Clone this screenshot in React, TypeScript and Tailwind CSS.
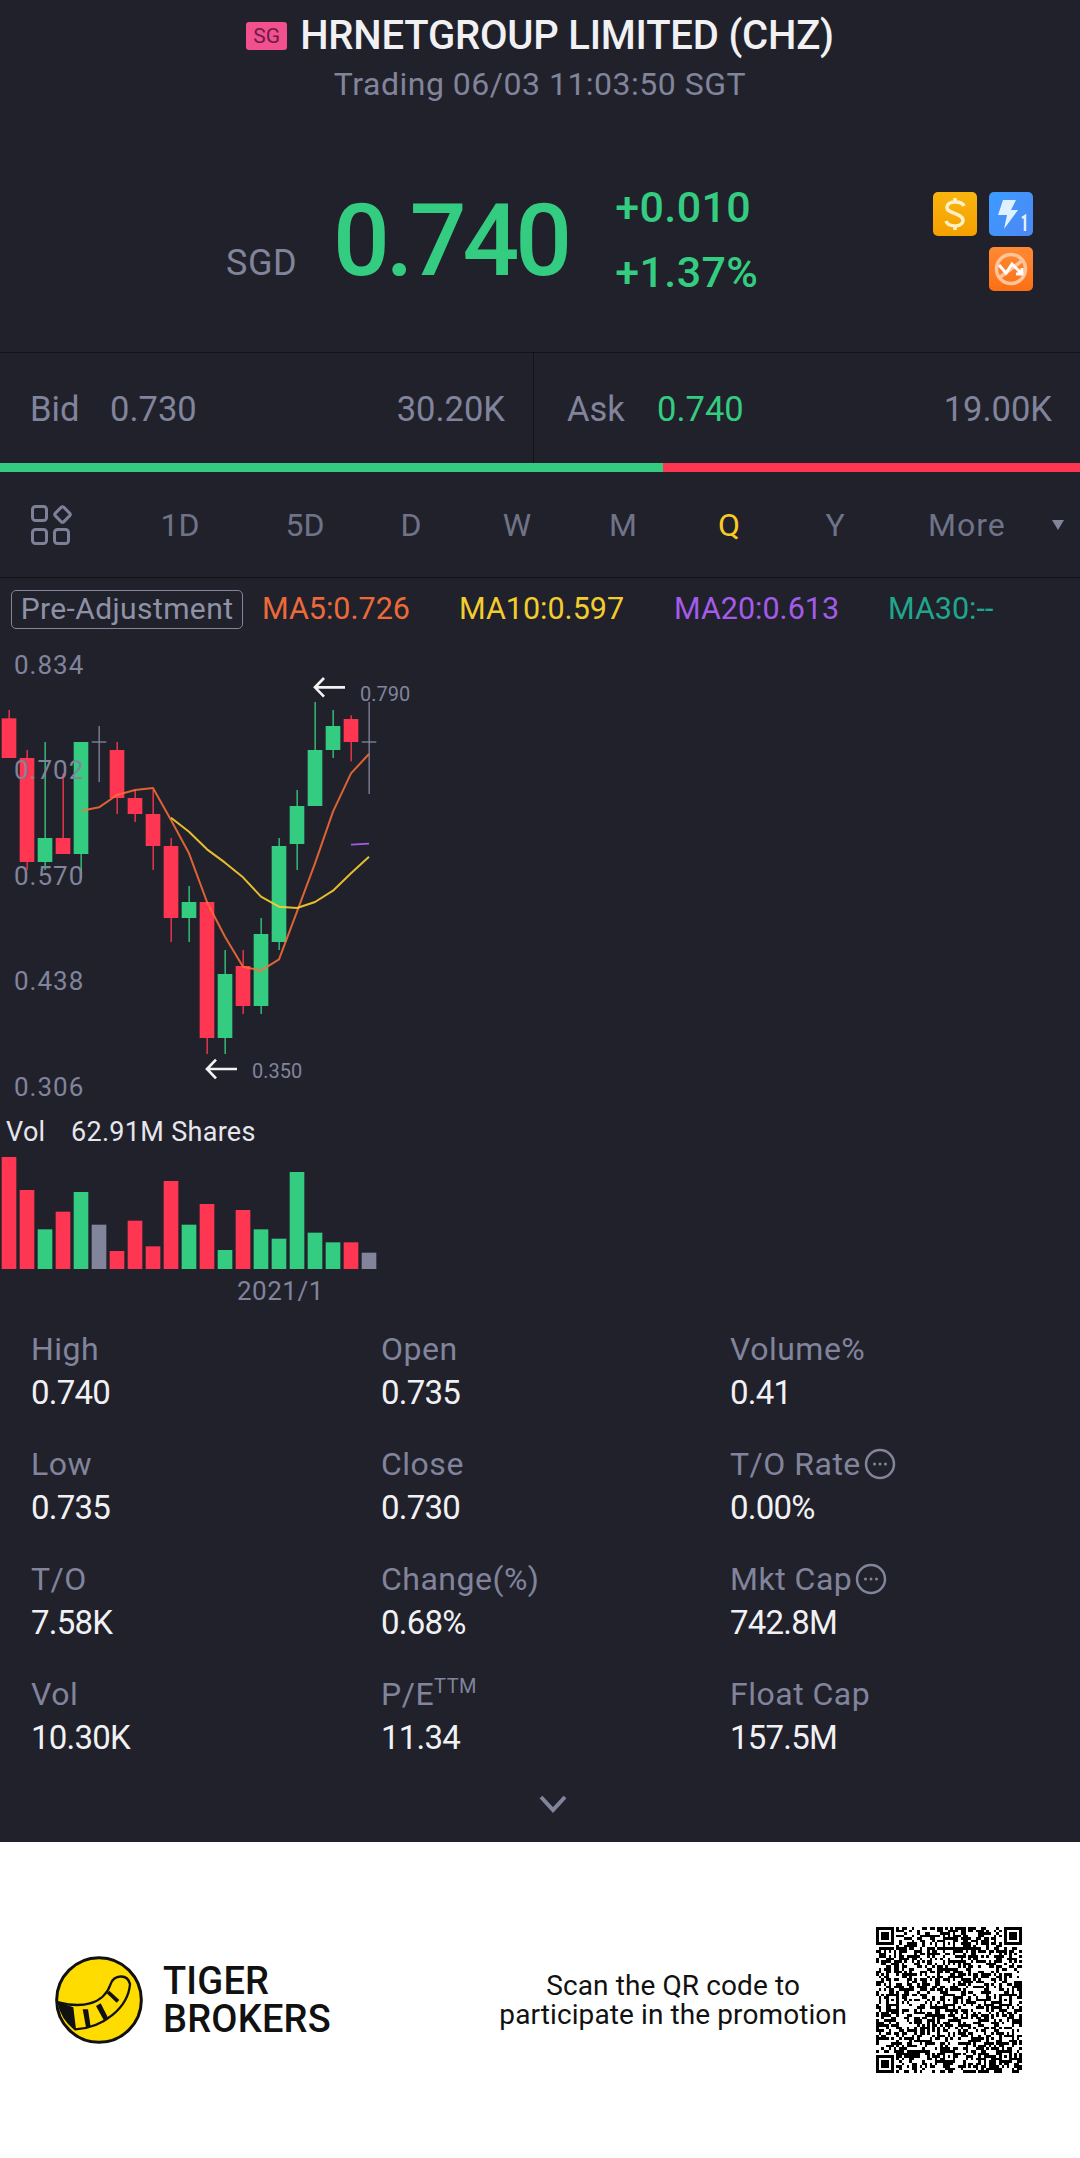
const GREEN = "#34cc80";
const RED = "#ff3652";
const GRAY = "#81849b";

// [x index implied] type, bodyTop, bodyBottom, wickTop, wickBottom (chart units = 1/3 px)
const candles: [string, number, number, number, number][] = [
  ["r", 235, 354, 210, 354],
  ["r", 354, 666, 330, 690],
  ["g", 594, 666, 306, 690],
  ["r", 594, 642, 400, 642],
  ["g", 306, 642, 306, 714],
  ["n", 306, 306, 258, 426],
  ["r", 330, 474, 306, 522],
  ["r", 474, 522, 450, 546],
  ["r", 522, 618, 450, 690],
  ["r", 618, 834, 594, 906],
  ["g", 786, 834, 738, 906],
  ["r", 786, 1194, 786, 1242],
  ["g", 1002, 1194, 930, 1242],
  ["r", 978, 1098, 930, 1122],
  ["g", 882, 1098, 834, 1122],
  ["g", 618, 906, 594, 930],
  ["g", 498, 612, 450, 690],
  ["g", 330, 498, 186, 498],
  ["g", 258, 330, 210, 354],
  ["r", 237, 306, 226, 364],
  ["n", 306, 306, 186, 462],
];

const volumes: [string, number][] = [
  ["r", 171], ["r", 270], ["g", 388], ["r", 335], ["g", 276], ["n", 374], ["r", 453],
  ["r", 362], ["r", 439], ["r", 243], ["g", 374], ["r", 312], ["g", 450], ["r", 330],
  ["g", 388], ["g", 416], ["g", 216], ["g", 398], ["g", 427], ["r", 427], ["n", 458],
];

const tone = (t: string) => (t === "r" ? RED : t === "g" ? GREEN : GRAY);

const stats = [
  { label: "High", value: "0.740" },
  { label: "Open", value: "0.735" },
  { label: "Volume%", value: "0.41" },
  { label: "Low", value: "0.735" },
  { label: "Close", value: "0.730" },
  { label: "T/O Rate", value: "0.00%", info: true },
  { label: "T/O", value: "7.58K" },
  { label: "Change(%)", value: "0.68%" },
  { label: "Mkt Cap", value: "742.8M", info: true },
  { label: "Vol", value: "10.30K" },
  { label: "P/E", value: "11.34", sup: "TTM" },
  { label: "Float Cap", value: "157.5M" },
];

function InfoIcon() {
  return (
    <svg width="32" height="32" viewBox="0 0 32 32" className="ml-[3px] shrink-0" fill="none">
      <circle cx="16" cy="16" r="14" stroke="#81849b" strokeWidth="2.5" />
      <circle cx="10.5" cy="16" r="1.5" fill="#81849b" />
      <circle cx="16" cy="16" r="1.5" fill="#81849b" />
      <circle cx="21.5" cy="16" r="1.5" fill="#81849b" />
    </svg>
  );
}

function Chart() {
  return (
    <svg width="440" height="480" viewBox="0 0 1320 1440" fill="none">
      {candles.map(([t, top, bottom, wt, wb], i) => {
        const x = 5 + 54 * i;
        const c = tone(t);
        return (
          <g key={i}>
            <rect x={x + 20.5} y={wt} width="4" height={wb - wt} fill={c} />
            {t === "n" ? (
              <rect x={x} y={top - 2} width="44" height="4" fill={c} />
            ) : (
              <rect x={x} y={top} width="44" height={bottom - top} fill={c} />
            )}
          </g>
        );
      })}
      <polyline
        points="245,512 297,502 351,465 405,450 459,444 513,540 567,640 621,786 675,890 729,980 783,992 837,958 891,815 945,670 999,515 1053,400 1107,342"
        stroke="#ff6f37"
        strokeOpacity="0.85"
        strokeWidth="6"
        strokeLinejoin="round"
      />
      <polyline
        points="513,533 567,575 621,628 675,668 729,712 783,770 837,800 891,804 945,786 999,752 1053,700 1107,650"
        stroke="#fbcf2f"
        strokeOpacity="0.9"
        strokeWidth="6"
        strokeLinejoin="round"
      />
      <line x1="1053" y1="614" x2="1107" y2="611" stroke="#a35be8" strokeWidth="5" />
      <path d="M1035 142H948M972 114L945 142L972 170" stroke="#f2f2f4" strokeWidth="8" />
      <path d="M711 1287H624M648 1259L621 1287L648 1315" stroke="#f2f2f4" strokeWidth="8" />
    </svg>
  );
}

function VolumeBars() {
  return (
    <svg width="440" height="113" viewBox="0 0 1320 339" fill="none">
      {volumes.map(([t, top], i) => (
        <rect key={i} x={5 + 54 * i} y={top - 168} width="44" height={507 - top} fill={tone(t)} />
      ))}
    </svg>
  );
}

// looks like a QR, modules are made up
function QrCode() {
  const n = 57;
  const cells: [number, number][] = [];
  let seed = 20210603;
  const next = () => {
    seed = (seed * 1664525 + 1013904223) % 4294967296;
    return seed / 4294967296;
  };
  const inFinder = (x: number, y: number) =>
    (x < 8 && y < 8) || (x >= n - 8 && y < 8) || (x < 8 && y >= n - 8);
  const aligns = [6, 28, 50];
  const inAlign = (x: number, y: number) =>
    aligns.some((a) =>
      aligns.some(
        (b) => !inFinder(a, b) && Math.abs(x - a) <= 2 && Math.abs(y - b) <= 2
      )
    );
  for (let y = 0; y < n; y++) {
    for (let x = 0; x < n; x++) {
      if (inFinder(x, y) || inAlign(x, y)) continue;
      if (next() > 0.5) cells.push([x, y]);
    }
  }
  const finder = (x: number, y: number) => (
    <g key={`${x}-${y}`}>
      <path d={`M${x} ${y}h7v7h-7zM${x + 1} ${y + 1}v5h5v-5z`} fill="#000" fillRule="evenodd" />
      <rect x={x + 2} y={y + 2} width="3" height="3" fill="#000" />
    </g>
  );
  return (
    <svg width="146" height="146" viewBox="0 0 57 57" shapeRendering="crispEdges" className="shrink-0">
      {cells.map(([x, y]) => (
        <rect key={`${x}.${y}`} x={x} y={y} width="1" height="1" fill="#000" />
      ))}
      {finder(0, 0)}
      {finder(50, 0)}
      {finder(0, 50)}
      {aligns.flatMap((a) =>
        aligns
          .filter((b) => !inFinder(a, b))
          .map((b) => (
            <g key={`a${a}-${b}`}>
              <path d={`M${a - 2} ${b - 2}h5v5h-5zM${a - 1} ${b - 1}v3h3v-3z`} fill="#000" fillRule="evenodd" />
              <rect x={a} y={b} width="1" height="1" fill="#000" />
            </g>
          ))
      )}
    </svg>
  );
}

function TigerLogo() {
  return (
    <svg width="90" height="90" viewBox="12 13 270 270" className="shrink-0">
      <circle cx="147" cy="148" r="127" fill="#ffdc00" stroke="#111" strokeWidth="9" />
      <path
        d="M26 155C90 172 160 165 182 100C192 72 232 68 240 100C235 170 160 232 76 236C50 215 32 190 26 155Z"
        fill="#ffdc00"
        stroke="#111"
        strokeWidth="7"
      />
      <path d="M26 155L70 170L78 236L68 232C50 215 32 190 26 155Z" fill="#111" />
      <path d="M98 176L114 176L122 228L108 230Z" fill="#111" />
      <path d="M138 166L152 158L176 205L163 212Z" fill="#111" />
      <path d="M170 128L178 120L208 148L200 156Z" fill="#111" />
    </svg>
  );
}

export default function App() {
  return (
    <div className="w-[1080px] h-[2158px] flex flex-col bg-[#20212b] font-['Roboto',sans-serif] overflow-hidden">
      {/* Header */}
      <div className="h-[352px] shrink-0 flex flex-col">
        <div className="h-[70px] flex items-center justify-center gap-[13px] pt-[2px]">
          <span className="w-[41px] h-[28px] rounded-[3px] bg-[#f2508f] text-[#6e1c44] text-[21px] leading-[28px] text-center">
            SG
          </span>
          <span className="text-[#f1f1f4] text-[40px] font-medium leading-none tracking-[-0.2px]">
            HRNETGROUP LIMITED (CHZ)
          </span>
        </div>
        <div className="text-center text-[#81849b] text-[32px] leading-[28px] tracking-[0.5px]">
          Trading 06/03 11:03:50 SGT
        </div>
        <div className="flex items-start mt-[91px] pl-[226px] pr-[47px]">
          <div className="flex items-baseline mt-[2px]">
            <span className="text-[#81849b] text-[36px] tracking-[0.5px]">SGD</span>
            <span className="ml-[36px] text-[100px] leading-[100px] font-medium tracking-[-4px]" style={{ color: GREEN }}>
              0.740
            </span>
          </div>
          <div className="ml-[47px] -mt-[14px] flex flex-col text-[43px] leading-[65px] font-medium tracking-[0.4px]" style={{ color: GREEN }}>
            <span>+0.010</span>
            <span>+1.37%</span>
          </div>
          <div className="ml-auto mt-[3px] grid grid-cols-[44px_44px] gap-x-[12px] gap-y-[11px]">
            <div className="w-[44px] h-[44px] rounded-[5px] bg-gradient-to-b from-[#f9b40f] to-[#f5a000] flex items-center justify-center">
              <svg width="24" height="34" viewBox="0 0 24 34" fill="none" stroke="#fff1c4" strokeWidth="3.5">
                <path d="M21 9C19 4 5 3 4 10C3 17 21 16 20 24C19 31 5 30 3 24" />
                <path d="M12 1V5M12 29V33" />
              </svg>
            </div>
            <div className="w-[44px] h-[44px] rounded-[5px] bg-gradient-to-br from-[#3a9cff] to-[#4c86f5] relative">
              <svg width="44" height="44" viewBox="0 0 44 44">
                <path d="M14 8H27L22 18H29L15 37L18 23H9Z" fill="#dff0ff" />
                <path d="M33 26L36 24V39" fill="none" stroke="#dff0ff" strokeWidth="2.5" />
              </svg>
            </div>
            <div className="col-start-2 w-[44px] h-[44px] rounded-[5px] bg-gradient-to-b from-[#ff8a33] to-[#fb6f14]">
              <svg width="44" height="44" viewBox="0 0 44 44" fill="none">
                <circle cx="22" cy="22" r="14.5" stroke="#ffc59a" strokeWidth="3.5" />
                <path d="M10 31L34 13" stroke="#ffc59a" strokeWidth="3.5" />
                <path d="M10 18L17 26L23 17L33 27M33 21V27H27" stroke="#fff" strokeWidth="3" />
              </svg>
            </div>
          </div>
        </div>
      </div>

      {/* Bid / Ask */}
      <div className="h-[111px] shrink-0 flex border-t border-[#12131a] text-[34.5px] text-[#81849b]">
        <div className="w-[534px] border-r border-[#12131a] flex items-center pt-[3px] pl-[30px] pr-[28px]">
          <span className="w-[80px]">Bid</span>
          <span>0.730</span>
          <span className="ml-auto">30.20K</span>
        </div>
        <div className="flex-1 flex items-center pt-[3px] pl-[33px] pr-[28px]">
          <span className="w-[90px]">Ask</span>
          <span style={{ color: GREEN }}>0.740</span>
          <span className="ml-auto">19.00K</span>
        </div>
      </div>
      <div className="h-[9px] shrink-0 flex">
        <div className="w-[663px]" style={{ background: GREEN }} />
        <div className="flex-1" style={{ background: RED }} />
      </div>

      {/* Period tabs */}
      <div className="h-[106px] shrink-0 flex items-center border-b border-[#12131a] text-[32px] text-[#6f7388]">
        <div className="w-[127px] pl-[30px]">
          <svg width="44" height="42" viewBox="0 0 44 42" fill="none" stroke="#7d8097" strokeWidth="3">
            <rect x="2.5" y="2.5" width="14" height="14" rx="3" />
            <rect x="26.5" y="4.5" width="12" height="12" rx="2" transform="rotate(45 32.5 10.5)" />
            <rect x="2.5" y="25.5" width="14" height="14" rx="3" />
            <rect x="24.5" y="25.5" width="14" height="14" rx="3" />
          </svg>
        </div>
        <span className="w-[106px] text-center">1D</span>
        <span className="w-[19px]" />
        <span className="w-[106px] text-center">5D</span>
        <span className="w-[106px] text-center">D</span>
        <span className="w-[106px] text-center">W</span>
        <span className="w-[106px] text-center">M</span>
        <span className="w-[106px] text-center text-[#f8ca26]">Q</span>
        <span className="w-[106px] text-center">Y</span>
        <span className="ml-[40px] tracking-[1px]">More</span>
        <span className="ml-[46px] w-0 h-0 border-x-[6px] border-x-transparent border-t-[10px] border-t-[#81849b]" />
      </div>

      {/* MA legend */}
      <div className="h-[62px] shrink-0 relative flex items-center text-[30.5px] pl-[11px]">
        <span className="w-[232px] h-[39px] border-[1.5px] border-[#81849b] rounded-[5px] text-[#8f92a7] text-[30px] leading-[35px] text-center tracking-[0.4px]">
          Pre-Adjustment
        </span>
        <span className="ml-[19px] w-[197px] text-[#ec6a3a]">MA5:0.726</span>
        <span className="w-[215px] text-[#f3cd2e]">MA10:0.597</span>
        <span className="w-[214px] text-[#a35be8]">MA20:0.613</span>
        <span className="text-[#1fa68c]">MA30:--</span>
      </div>

      {/* Candles */}
      <div className="relative h-[480px] shrink-0">
        <Chart />
        {[
          ["0.834", "top-[10px]"],
          ["0.702", "top-[115px]"],
          ["0.570", "top-[221px]"],
          ["0.438", "top-[326px]"],
          ["0.306", "top-[432px]"],
        ].map(([v, pos]) => (
          <span key={v} className={`absolute left-[14px] ${pos} text-[26px] leading-[30px] tracking-[1px] text-[#81849b]`}>
            {v}
          </span>
        ))}
        <span className="absolute left-[360px] top-[42px] text-[20px] leading-[24px] text-[#81849b]">0.790</span>
        <span className="absolute left-[252px] top-[419px] text-[20px] leading-[24px] text-[#81849b]">0.350</span>
      </div>

      {/* Volume */}
      <div className="h-[30px] shrink-0 -mt-[3px] flex items-center pl-[6px] text-[27px] text-[#e6e6ec] tracking-[0.3px]">
        <span className="w-[65px]">Vol</span>
        <span>62.91M Shares</span>
      </div>
      <div className="h-[113px] shrink-0 mt-[9px]">
        <VolumeBars />
      </div>
      <div className="text-[26px] leading-[30px] mt-[7px] pl-[237px] text-[#81849b] tracking-[0.5px] shrink-0">2021/1</div>

      {/* Stats */}
      <div className="grid grid-cols-[350px_349px_1fr] pl-[31px] mt-[21px] shrink-0">
        {stats.map((s) => (
          <div key={s.label} className="h-[115px]">
            <div className="flex items-center h-[44px] text-[32px] leading-[44px] text-[#81849b] tracking-[0.5px]">
              <span>{s.label}</span>
              {s.sup && <sup className="text-[20px] -top-[8px]">{s.sup}</sup>}
              {s.info && <InfoIcon />}
            </div>
            <div className="text-[33px] leading-[44px] text-[#f1f1f4] tracking-[-0.8px]">{s.value}</div>
          </div>
        ))}
      </div>
      <div className="flex justify-center pl-[26px] mt-[8px] shrink-0">
        <svg width="28" height="18" viewBox="0 0 28 18" fill="none" stroke="#81849b" strokeWidth="4">
          <path d="M2 2L14 15L26 2" />
        </svg>
      </div>

      {/* Promo footer */}
      <div className="flex-1 mt-[29px] bg-white flex items-center pl-[54px] pr-[58px]">
        <TigerLogo />
        <div className="ml-[19px] text-[38px] leading-[38px] font-medium text-[#111] tracking-[0.2px]">
          <div>TIGER</div>
          <div>BROKERS</div>
        </div>
        <div className="ml-auto mr-[29px] text-center text-[28px] leading-[29px] text-[#111] tracking-[0.1px]">
          <div>Scan the QR code to</div>
          <div>participate in the promotion</div>
        </div>
        <QrCode />
      </div>
    </div>
  );
}
